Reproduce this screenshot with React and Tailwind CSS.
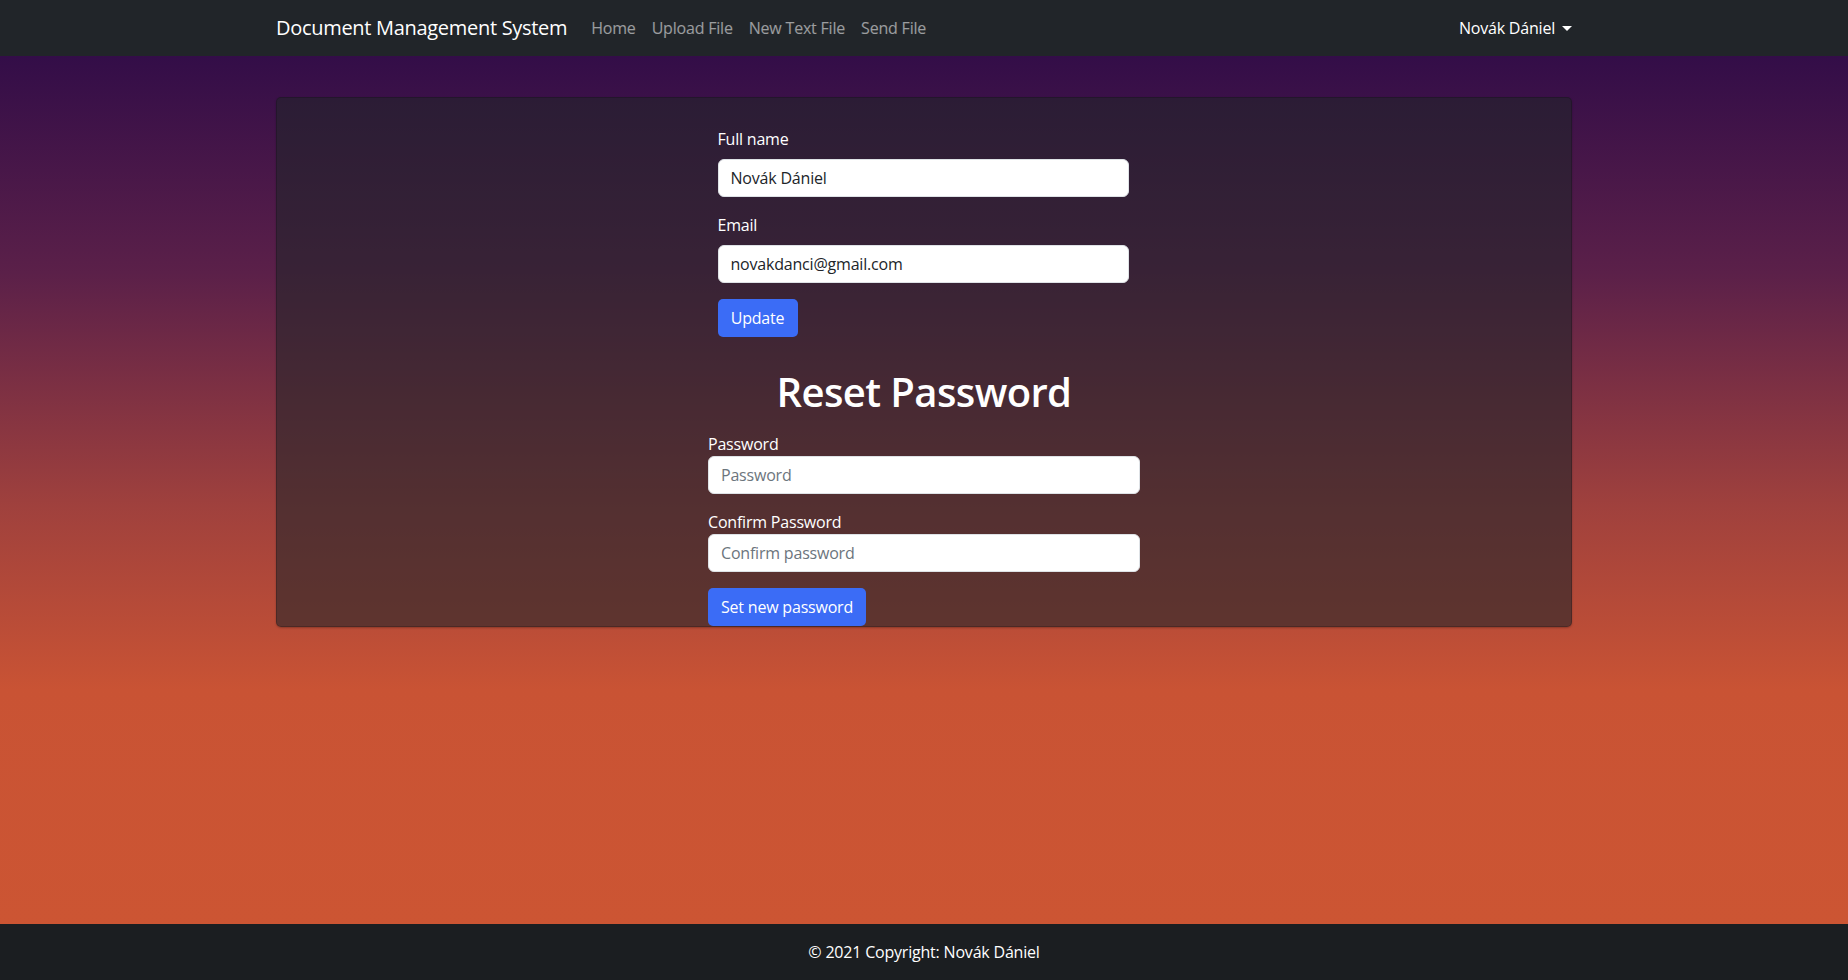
import React from "react";

export default function App() {
  return (
    <div
      className="min-h-screen flex flex-col text-white [font-family:'Open_Sans','Noto_Sans',sans-serif]"
    >
      {/* Navbar */}
      <nav className="h-[56px] bg-[#212529] flex items-center shrink-0">
        <div className="w-[1296px] mx-auto flex items-center">
          <span className="text-[20px] leading-[30px] text-white mr-[16px] tracking-[-0.3px]">
            Document Management System
          </span>
          <ul className="flex items-center text-[16px] tracking-[-0.2px]">
            <li className="px-[8px] py-[8px] text-white/55">Home</li>
            <li className="px-[8px] py-[8px] text-white/55">Upload File</li>
            <li className="px-[8px] py-[8px] text-white/55">New Text File</li>
            <li className="px-[8px] py-[8px] text-white/55">Send File</li>
          </ul>
          <div className="ml-auto flex items-center text-[16px] text-white tracking-[-0.2px]">
            <span>Novák Dániel</span>
            <span className="ml-[7px] w-0 h-0 border-l-[5px] border-r-[5px] border-t-[5px] border-l-transparent border-r-transparent border-t-white mt-[1px]" />
          </div>
        </div>
      </nav>

      {/* Main */}
      <main className="flex-1 bg-[linear-gradient(to_bottom,#330d48_0%,#5b2049_25%,#a0413d_52%,#c95334_73%,#cc5533_100%)]">
        <div className="w-[1296px] mx-auto mt-[41px] rounded-[5px] border border-black/20 bg-[#212529]/60 shadow-[0_1px_2px_rgba(0,0,0,0.25)]">
          <div className="pt-[29px] flex flex-col items-center">
            {/* Profile form */}
            <div className="w-[411px] -translate-x-[1px]">
              <label className="block text-[16px] leading-[24px] mb-[8px] tracking-[-0.2px]">Full name</label>
              <div className="h-[38px] bg-white rounded-[6px] border border-[#dee2e6] px-[12px] flex items-center text-[16px] text-[#212529] tracking-[-0.2px]">
                Novák Dániel
              </div>
              <label className="block text-[16px] leading-[24px] mb-[8px] mt-[16px] tracking-[-0.2px]">Email</label>
              <div className="h-[38px] bg-white rounded-[6px] border border-[#dee2e6] px-[12px] flex items-center text-[16px] text-[#212529] tracking-[-0.2px]">
                novakdanci@gmail.com
              </div>
              <button className="mt-[16px] h-[38px] w-[80px] bg-[#3b6cf6] rounded-[5px] text-white text-[16px] tracking-[-0.2px]">
                Update
              </button>
            </div>

            <h1 className="mt-[31px] text-[40px] leading-[48px] font-semibold tracking-[-0.6px]">Reset Password</h1>

            {/* Password form */}
            <div className="w-[432px] mt-[16px]">
              <label className="block text-[16px] leading-[24px] tracking-[-0.2px]">Password</label>
              <div className="h-[38px] bg-white rounded-[6px] border border-[#dee2e6] px-[12px] flex items-center text-[16px] text-[#6c757d] tracking-[-0.2px]">
                Password
              </div>
              <label className="block text-[16px] leading-[24px] mt-[16px] tracking-[-0.2px]">Confirm Password</label>
              <div className="h-[38px] bg-white rounded-[6px] border border-[#dee2e6] px-[12px] flex items-center text-[16px] text-[#6c757d] tracking-[-0.2px]">
                Confirm password
              </div>
              <button className="mt-[16px] h-[38px] px-[13px] bg-[#3b6cf6] rounded-[5px] text-white text-[16px] tracking-[-0.2px]">
                Set new password
              </button>
            </div>
          </div>
        </div>
      </main>

      {/* Footer */}
      <footer className="h-[56px] bg-[#1b1e21] flex items-center justify-center shrink-0">
        <span className="text-[16px] text-white tracking-[-0.2px]">© 2021 Copyright: Novák Dániel</span>
      </footer>
    </div>
  );
}
